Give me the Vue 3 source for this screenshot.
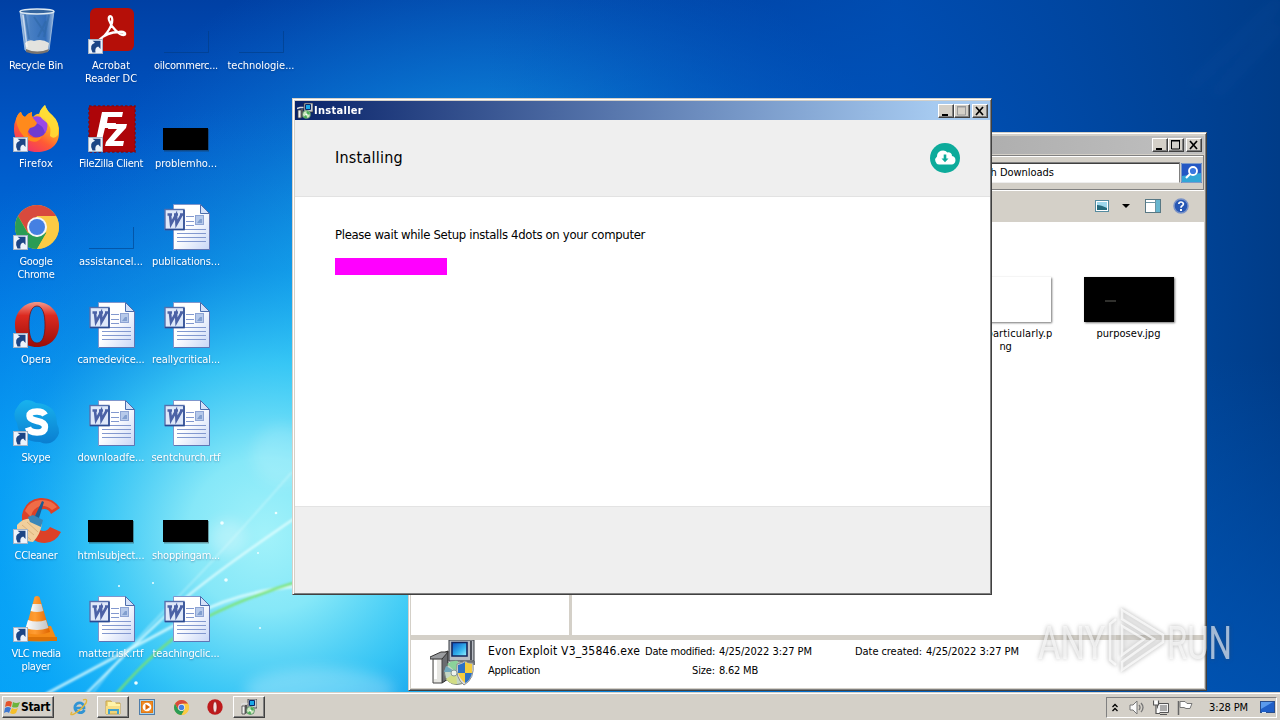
<script setup>
const desktop = [
  { k: 'bin', c: 1, r: 1, t: [['Recycle Bin', 54]] },
  { k: 'firefox', c: 1, r: 2, s: 1, t: [['Firefox', 34]] },
  { k: 'chrome', c: 1, r: 3, s: 1, t: [['Google', 33], ['Chrome', 37]] },
  { k: 'opera', c: 1, r: 4, s: 1, t: [['Opera', 30]] },
  { k: 'skype', c: 1, r: 5, s: 1, t: [['Skype', 29]] },
  { k: 'ccleaner', c: 1, r: 6, s: 1, t: [['CCleaner', 43]] },
  { k: 'vlc', c: 1, r: 7, s: 1, t: [['VLC media', 49], ['player', 29]] },
  { k: 'acrobat', c: 2, r: 1, s: 1, t: [['Acrobat', 38], ['Reader DC', 52]] },
  { k: 'filezilla', c: 2, r: 2, s: 1, t: [['FileZilla Client', 64]] },
  { k: 'clear', c: 2, r: 3, t: [['assistancel...', 64]] },
  { k: 'word', c: 2, r: 4, t: [['camedevice...', 67]] },
  { k: 'word', c: 2, r: 5, t: [['downloadfe...', 67]] },
  { k: 'black', c: 2, r: 6, t: [['htmlsubject...', 67]] },
  { k: 'word', c: 2, r: 7, t: [['matterrisk.rtf', 65]] },
  { k: 'clear', c: 3, r: 1, t: [['oilcommerc...', 64]] },
  { k: 'black', c: 3, r: 2, t: [['problemho...', 62]] },
  { k: 'word', c: 3, r: 3, t: [['publications...', 68]] },
  { k: 'word', c: 3, r: 4, t: [['reallycritical...', 68]] },
  { k: 'word', c: 3, r: 5, t: [['sentchurch.rtf', 69]] },
  { k: 'black', c: 3, r: 6, t: [['shoppingam...', 68]] },
  { k: 'word', c: 3, r: 7, t: [['teachingclic...', 67]] },
  { k: 'clear', c: 4, r: 1, t: [['technologie...', 67]] },
]

// Tracks a run of text so that it fills the given width.
const vFit = {
  mounted(el, { value }) {
    const w = el.getBoundingClientRect().width
    el.style.letterSpacing = (value - w) / el.textContent.length + 'px'
  },
}
</script>

<template>
  <div class="screen">
    <svg class="wall" viewBox="0 0 1280 720">
      <defs>
        <linearGradient id="sky" x1="0" y1="0" x2="0" y2="1">
          <stop offset="0" stop-color="#0040a4" /><stop offset=".2" stop-color="#0058c8" />
          <stop offset=".42" stop-color="#0078e4" /><stop offset=".65" stop-color="#0098f6" />
          <stop offset="1" stop-color="#00a6fc" />
        </linearGradient>
        <radialGradient id="glow" gradientUnits="userSpaceOnUse" cx="265" cy="535" r="430">
          <stop offset="0" stop-color="#a2f2fa" /><stop offset=".18" stop-color="#8cecf9" stop-opacity=".95" />
          <stop offset=".4" stop-color="#40d0f8" stop-opacity=".8" />
          <stop offset=".62" stop-color="#16a8f2" stop-opacity=".4" /><stop offset="1" stop-color="#0a80dc" stop-opacity="0" />
        </radialGradient>
        <radialGradient id="upper" gradientUnits="userSpaceOnUse" cx="500" cy="400" r="480">
          <stop offset="0" stop-color="#30c8f4" stop-opacity=".95" /><stop offset=".45" stop-color="#18a8e8" stop-opacity=".8" />
          <stop offset=".7" stop-color="#0c7cd4" stop-opacity=".6" /><stop offset="1" stop-color="#0a66c8" stop-opacity="0" />
        </radialGradient>
        <linearGradient id="east" x1="0" x2="1" y1="0" y2="0">
          <stop offset=".38" stop-color="#0050b4" stop-opacity="0" /><stop offset=".7" stop-color="#0050b4" stop-opacity=".75" />
          <stop offset="1" stop-color="#003c88" />
        </linearGradient>
        <linearGradient id="south" x1="0" x2="0" y1="0" y2="1">
          <stop offset=".5" stop-color="#0056b8" stop-opacity="0" /><stop offset="1" stop-color="#0056b8" stop-opacity=".85" />
        </linearGradient>
        <filter id="soft"><feGaussianBlur stdDeviation=".8" /></filter>
        <filter id="haze"><feGaussianBlur stdDeviation="7" /></filter>
      </defs>
      <rect width="1280" height="720" fill="url(#sky)" />
      <rect width="1280" height="720" fill="url(#upper)" />
      <rect width="1280" height="720" fill="url(#glow)" />
      <rect width="1280" height="720" fill="url(#east)" />
      <rect x="1200" width="80" height="720" fill="url(#south)" />
      <path d="M1280 0L1190 88M1280 25L1215 95" stroke="#1a5aaa" stroke-width="5" opacity=".3" filter="url(#haze)" />
      <g filter="url(#haze)" fill="#fff">
        <circle cx="228" cy="538" r="18" opacity=".28" /><circle cx="282" cy="455" r="30" opacity=".15" />
        <ellipse cx="320" cy="690" rx="75" ry="22" opacity=".25" />
      </g>
      <g fill="none" filter="url(#soft)" stroke="#e6ffff">
        <path d="M46 694Q142 643 190 617T300 586" stroke-width="2.8" opacity=".8" />
        <path d="M86 694Q143 636 175 607T298 516" stroke-width="2.2" opacity=".85" />
        <path d="M92 694Q125 650 171 604T292 472" stroke-width="1.8" opacity=".4" />
        <path d="M116 694Q165 638 207 617T300 581" stroke="#7be46d" stroke-width="2.4" opacity=".95" />
      </g>
      <g fill="#effeff">
        <circle cx="222" cy="523" r="1.8" /><circle cx="276" cy="513" r="1.3" /><circle cx="226" cy="580" r="1.8" />
        <circle cx="136" cy="683" r="1.8" /><circle cx="119" cy="586" r="1" /><circle cx="153" cy="583" r="1" />
        <circle cx="258" cy="553" r="1" /><circle cx="260" cy="628" r="1" />
      </g>
    </svg>

    <svg class="defs" width="0" height="0">
      <defs>
        <linearGradient id="fx" x1=".8" y1="0" x2=".2" y2="1"><stop offset="0" stop-color="#fff34a" /><stop offset=".35" stop-color="#ffae1e" /><stop offset=".65" stop-color="#ff5a35" /><stop offset="1" stop-color="#ee2c72" /></linearGradient>
        <linearGradient id="op" x1="0" y1="0" x2="0" y2="1"><stop offset="0" stop-color="#f29a8c" /><stop offset=".3" stop-color="#dc2a20" /><stop offset="1" stop-color="#9a0d08" /></linearGradient>
        <linearGradient id="pg" x1="0" y1="0" x2="1" y2="1"><stop offset=".45" stop-color="#fff" /><stop offset="1" stop-color="#c8d6f6" /></linearGradient>
        <linearGradient id="sk" x1="0" y1="0" x2="0" y2="1"><stop offset="0" stop-color="#18b2ee" /><stop offset="1" stop-color="#0a7ed0" /></linearGradient>
        <linearGradient id="cn" x1="0" x2="1"><stop offset="0" stop-color="#f58a1c" /><stop offset=".4" stop-color="#ff9d33" /><stop offset="1" stop-color="#e06500" /></linearGradient>
        <linearGradient id="wh" x1="0" x2="1"><stop offset="0" stop-color="#fff" /><stop offset="1" stop-color="#c4c4c4" /></linearGradient>
        <linearGradient id="gl" x1="0" x2="1"><stop offset="0" stop-color="#d8e8f6" stop-opacity=".75" /><stop offset=".3" stop-color="#6f9fd0" stop-opacity=".65" /><stop offset=".75" stop-color="#5489c4" stop-opacity=".6" /><stop offset="1" stop-color="#cfe2f2" stop-opacity=".75" /></linearGradient>
        <linearGradient id="scr" x1="0" y1="0" x2="1" y2="1"><stop offset="0" stop-color="#0a4fc4" /><stop offset=".6" stop-color="#36b6ee" /><stop offset="1" stop-color="#9cf4ff" /></linearGradient>
        <symbol id="setup" viewBox="0 0 46 46">
          <path d="M19 0H44V21H19Z" fill="#b9bdc4" stroke="#33363c" /><path d="M22 2.500H37V16H22Z" fill="url(#scr)" stroke="#16265c" stroke-width="1.600" />
          <path d="M40 1H42V20H40Z" fill="#4b4f58" /><path d="M30 21H45V25H30Z" fill="#6b6f78" />
          <path d="M11 14L18 11V39L12 43Z" fill="#6a6c70" stroke="#222" /><path d="M3 18H12V43H3Z" fill="#e6e6e2" stroke="#444" />
          <path d="M4 20H7V39H4Z" fill="#fff" /><path d="M0 17L11 12L18 12L12 19H0Z" fill="#9a9c9f" stroke="#333" />
          <ellipse cx="27" cy="33" rx="12.500" ry="11.500" fill="#c5d7c4" stroke="#7a8378" /><path d="M26 32L17 24Q22 20 28 21Z" fill="#8bd29a" /><path d="M26 32L16 39Q19 44 27 44Z" fill="#d2dd85" /><path d="M26 32L14 32L16 26Z" fill="#70a8bd" />
          <path d="M27 24Q32 23 35 21Q38 24 43 23Q45 39 34 45Q25 38 27 24Z" fill="#ddd" stroke="#8e918f" />
          <path d="M28 25Q32 24 35 22V33H28Z" fill="#2c71c5" /><path d="M35 22Q39 24 42 24V33H35Z" fill="#f4cc3c" /><path d="M28 33H35V43Q30 39 28 33Z" fill="#f4cc3c" /><path d="M35 33H42Q40 41 35 43Z" fill="#2c71c5" />
          <circle cx="24" cy="33" r="3" fill="#eef4ee" stroke="#899" />
        </symbol>
        <symbol id="setupsmall" viewBox="0 0 16 16">
          <path d="M7 0H16V9H7Z" fill="#c8ccd2" stroke="#333" stroke-width=".8" /><path d="M8.500 1.500H13.500V6.500H8.500Z" fill="#18a8e8" stroke="#0a2868" />
          <path d="M0 5.500L3 4.500H6.500" stroke="#ddd" stroke-width="1.400" fill="none" /><path d="M1 7H4V15H1Z" fill="#f2f2f0" stroke="#444" stroke-width=".8" /><path d="M4 6H6V14L4 15Z" fill="#555" />
          <circle cx="9.500" cy="11.500" r="4" fill="#cfe8c0" stroke="#3c7a50" stroke-width=".7" /><path d="M9.500 11.500V8A4 4 0 0 1 13 11.500Z" fill="#4cae58" /><path d="M9.500 11.500L6.500 14Q8 16 10 15Z" fill="#4cae58" /><circle cx="9.500" cy="11.500" r="1" fill="#fff" />
        </symbol>
        <symbol id="chromeball" viewBox="0 0 44 44">
          <circle cx="22" cy="22" r="22" fill="#f9c63d" />
          <path d="M3 11A22 22 0 0 1 41 11H22L12.500 27Z" fill="#d84a3d" /><path d="M3 11A22 22 0 0 0 22 44L32 27L22 32L12.500 27.500Z" fill="#2a9c55" />
          <path d="M41 11H22V22L31.500 27.500L22 44A22 22 0 0 0 41 11Z" fill="#fbcb45" /><circle cx="22" cy="22" r="10" fill="#f4f6f8" /><circle cx="22" cy="22" r="8" fill="#4580e2" />
        </symbol>
      </defs>
    </svg>

    <div class="desktop">
      <div v-for="(d, i) in desktop" :key="i" class="item" :style="{ gridColumn: d.c, gridRow: d.r }">
        <svg class="ico" viewBox="0 0 48 48">
          <template v-if="d.k === 'bin'">
            <path d="M8 4H42L37 43Q25 49 13 43Z" fill="url(#gl)" stroke="#adc8e2" stroke-width=".8" />
            <path d="M13 7L17 32M37 8L32 30M22 10L33 26M34 14L26 30" stroke="#2f68a7" stroke-width="2" opacity=".6" />
            <path d="M13 36Q17 32 22 34Q30 31 37 36L36 43Q25 48 14 43Z" fill="#ece9df" opacity=".95" />
            <path d="M14 42Q25 47 37 42L36 45Q25 49 14 45Z" fill="#77736f" />
            <ellipse cx="25" cy="4.500" rx="17" ry="2.500" fill="#35659e" stroke="#dde9f2" stroke-width="1.3" />
            <path d="M11 8L15 40" stroke="#fff" stroke-width="1.5" opacity=".6" />
          </template>
          <template v-else-if="d.k === 'firefox'">
            <path d="M4 14Q6 8 9 7Q10 11 13 12Q16 8 20 7Q19 11 21 12Q25 8 27 9Q29 3 33 0Q35 6 40 10Q48 17 47 28C47 40 38 47 25 47C11 47 2 37 2 24Q2 18 4 14Z" fill="url(#fx)" />
            <circle cx="25" cy="23" r="9.500" fill="#6f3bd1" /><path d="M17 15Q24 8 33 14Q38 21 33 28Q31 20 24 18Q20 19 17 15Z" fill="#9a48e6" />
            <path d="M4 14Q6 8 9 7Q10 11 13 12Q16 8 20 7Q19 11 21 13L25 18Q24 22 18 23Q14 28 17 31Q23 35 30 31Q26 40 16 35Q5 27 4 14Z" fill="#ff8a1c" />
            <path d="M33 0Q35 6 40 10Q48 17 46 30Q42 35 38 31Q40 21 34 17Q26 12 28 6Z" fill="#ffdf36" opacity=".85" />
          </template>
          <svg v-else-if="d.k === 'chrome'" x="3" y="2" width="44" height="44"><use href="#chromeball" /></svg>
          <template v-else-if="d.k === 'opera'">
            <path fill-rule="evenodd" d="M25 1C38 1 47 11 47 24S38 46 25 46S3 37 3 24S12 1 25 1ZM25 5C19 5 17 14 17 24S19 42 25 42S33 34 33 24S31 5 25 5Z" fill="url(#op)" />
            <path d="M25 5C19 5 17 14 17 24S19 42 25 42S33 34 33 24S31 5 25 5Z" fill="none" stroke="#711" stroke-width=".8" />
          </template>
          <template v-else-if="d.k === 'skype'">
            <path d="M14 1Q20 1 24 4Q45 5 45 25Q50 34 43 41Q36 47 28 43Q7 43 5 24Q-1 15 6 7Q9 2 14 1Z" fill="url(#sk)" />
            <path d="M33 16Q31 12.500 25 12.500Q17.500 12.500 17.500 17Q17.500 20.500 25 22Q33 23.500 33 28Q33 33.500 25 33.500Q17.500 33.500 16 28.500" fill="none" stroke="#fff" stroke-width="6.400" />
          </template>
          <template v-else-if="d.k === 'ccleaner'">
            <path d="M48 11Q41 0 28 1Q13 3 10 18Q9 38 26 45Q42 49 49 35L38 30Q34 36 28 33Q21 29 23 20Q25 12 32 12Q37 12 39 17Z" fill="#dc4127" />
            <path d="M13 14Q17 4 28 3Q39 2 45 10L40 13Q34 8 28 9Q20 12 19 20Z" fill="#f06c47" />
            <path d="M5 28Q12 20 22 22L30 27Q28 38 21 45Q14 45 5 37Z" fill="#f1cf9c" /><path d="M10 28L22 38M15 25L26 35M7 32L19 43" stroke="#dcb27a" />
            <path d="M16 20L21 18L31 23L29 30L18 25Z" fill="#3a86b8" /><path d="M23 19L30 4L32 5L27 21Z" fill="#1c5d93" />
          </template>
          <template v-else-if="d.k === 'vlc'">
            <path d="M12 33L39 31L45 45Q27 48 9 45Z" fill="#f58a16" /><path d="M9 42L45 42V46H9Z" fill="#dc7207" />
            <path d="M22.500 2Q25 0 27.500 2L38 37Q25 42 13 37Z" fill="url(#cn)" />
            <path d="M20.700 9H29.300L31.300 16Q25 18 18.700 16Z" fill="url(#wh)" /><path d="M16 25Q25 28 34 25L36.500 33Q25 37 13.600 33Z" fill="url(#wh)" />
          </template>
          <template v-else-if="d.k === 'acrobat'">
            <rect x="3" y="1" width="44" height="43" rx="6" fill="#b50f08" />
            <path d="M12 33C19 29 27 17 25 11C24 8 21 9 22 13C24 20 32 28 37 28C40 27 37 24 32 25C25 25 17 28 12 33Z" fill="none" stroke="#fff" stroke-width="2.300" stroke-linejoin="round" />
          </template>
          <template v-else-if="d.k === 'filezilla'">
            <rect x="2" y="1" width="46" height="46" fill="#ad0509" stroke="#7c0d18" stroke-width="1.500" stroke-dasharray="2.500 2" />
            <path d="M15 7H36L35 12H21L20 18H29L28 23H18L15 35H9Z" fill="#fff" /><path d="M22 19H40L39 23L27 36H37L36 41H18L19 37L30 24H21Z" fill="#fff" />
          </template>
          <template v-else-if="d.k === 'word'">
            <path d="M11.500 1.500H38.500L47.500 10.500V46.500H11.500Z" fill="url(#pg)" stroke="#7f96cc" /><path d="M12 46.500H47.500V10" fill="none" stroke="#5f76b4" />
            <path d="M38.500 1.500V10.500H47.500Z" fill="#d4e1f8" stroke="#4d6dac" />
            <path d="M24 13.500H32M24 18.500H32M24 22.500H32M15 26.500H44M15 30.500H44M15 34.500H44M15 38.500H44" stroke="#8298cf" />
            <rect x="33.500" y="12.500" width="8" height="9" fill="#b6c9ea" stroke="#8ea4d4" /><path d="M35 20L38 16H40V20Z" fill="#829fcf" />
            <rect x="3" y="6.500" width="19" height="20" fill="#dfe8f9" stroke="#5670ad" stroke-width="1.400" /><path d="M3 26.500H22V7" fill="none" stroke="#2c4b92" stroke-width="1.500" />
            <path d="M5.500 11.500H10M12 11.500H16M18 11.500H21M8 12L9 21L14 12L14.500 21L19.500 12" fill="none" stroke="#4c62a6" stroke-width="2.600" />
          </template>
          <template v-else-if="d.k === 'black'"><rect x="2" y="24" width="45" height="22.500" fill="#222" opacity=".4" /><rect x="1" y="23" width="45" height="22" fill="#000" /></template>
          <path v-else d="M2 45.500H46.500V24" fill="none" stroke="#023a80" stroke-opacity=".55" stroke-width="1" />
          <template v-if="d.s">
            <rect x="1.500" y="32.500" width="14" height="14" fill="#edf3fb" stroke="#a6b4c6" />
            <path d="M5.500 45.500Q1.500 38 8 35.800L5.500 33.800H13.500V42L11.200 39.500Q7.500 40.500 8.500 45.500Z" fill="#1c4585" />
          </template>
        </svg>
        <div class="cap"><div v-for="l in d.t" :key="l[0]"><span v-fit="l[1]">{{ l[0] }}</span></div></div>
      </div>
    </div>

    <section class="win explorer">
      <div class="ebar">
        <span class="btn"><svg viewBox="0 0 16 14"><path d="M4 10h6v2H4z" /></svg></span><span class="btn"><svg viewBox="0 0 16 14"><path d="M3.500 3h8v8h-8zM3 2.500h9" fill="none" stroke="#000" /></svg></span><span class="btn last"><svg viewBox="0 0 16 14"><path d="M4 3l7 8M11 3l-7 8" stroke="#000" stroke-width="1.700" /></svg></span>
      </div>
      <div class="search">
        <div class="field"><span v-fit="91">Search Downloads</span></div>
        <svg class="go" viewBox="0 0 21 20"><rect width="21" height="20" fill="#2458c4" /><path d="M1 13L20 10V19H1Z" fill="#32a6d7" /><path d="M.5 .5H20.500V19.500H.500Z" fill="none" stroke="#7d9bc9" /><circle cx="12" cy="8" r="4" fill="#3b78df" stroke="#fff" stroke-width="1.800" /><path d="M9 11L5 15" stroke="#fff" stroke-width="2.200" /></svg>
      </div>
      <div class="tools">
        <svg viewBox="0 0 14 12" width="14" height="12"><rect x=".5" y=".5" width="13" height="11" fill="#fff" stroke="#558b9f" /><path d="M2 2H12V9H2Z" fill="#9ed8ed" /><path d="M2 5Q6 5 12 8V10H2Z" fill="#246a7c" /></svg>
        <svg class="drop" viewBox="0 0 8 4" width="8" height="4"><path d="M0 0H8L4 4Z" /></svg>
        <svg class="pane" viewBox="0 0 16 14" width="16" height="14"><rect x=".5" y=".5" width="15" height="13" fill="#fff" stroke="#587884" /><path d="M1 3.500H10M10.500 1V13" stroke="#6c95a4" /><path d="M11 1H15V13H11Z" fill="#67b6cf" /></svg>
        <svg class="help" viewBox="0 0 16 16" width="16" height="16"><circle cx="8" cy="8" r="7" fill="#2757b4" stroke="#7992c8" stroke-width="1.500" /><path d="M5.800 6Q6 4 8 4T10.400 6Q10.300 7.200 8.900 8Q8 8.500 8 9.800" fill="none" stroke="#fff" stroke-width="1.700" /><rect x="7" y="11" width="2" height="2" fill="#fff" /></svg>
      </div>
      <div class="files">
        <div class="side"></div>
        <div class="list">
          <div class="file"><div class="thumb white"></div><div class="fn long"><span v-fit="66">particularly.p</span></div><div class="fn"><span v-fit="12">ng</span></div></div>
          <div class="file"><div class="thumb dark"><i></i></div><div class="fn"><span v-fit="64">purposev.jpg</span></div></div>
        </div>
      </div>
      <div class="details">
        <svg class="big" width="46" height="46"><use href="#setup" /></svg>
        <div class="c1"><p class="nm"><span v-fit="152">Evon Exploit V3_35846.exe</span></p><p><span v-fit="52">Application</span></p></div>
        <div class="c2"><p><span v-fit="70">Date modified:</span></p><p><span v-fit="23">Size:</span></p></div>
        <div class="c3"><p><span v-fit="93">4/25/2022 3:27 PM</span></p><p><span v-fit="39">8.62 MB</span></p></div>
        <div class="c4"><p><span v-fit="67">Date created:</span></p></div>
        <div class="c5"><p><span v-fit="93">4/25/2022 3:27 PM</span></p></div>
      </div>
    </section>

    <section class="win installer">
      <div class="title">
        <svg width="16" height="16"><use href="#setupsmall" /></svg>
        <b><span v-fit="49">Installer</span></b>
        <span class="btn"><svg viewBox="0 0 16 14"><path d="M4 10h6v2H4z" /></svg></span><span class="btn"><svg viewBox="0 0 16 14"><path d="M3.500 3h8v8h-8zM3 2.500h9" fill="none" stroke="#999" /></svg></span><span class="btn last"><svg viewBox="0 0 16 14"><path d="M4 3l7 8M11 3l-7 8" stroke="#000" stroke-width="1.700" /></svg></span>
      </div>
      <div class="head">
        <span class="h1"><span v-fit="68">Installing</span></span>
        <svg width="30" height="30" viewBox="0 0 30 30"><circle cx="15" cy="15" r="15" fill="#0dab9b" /><path d="M9 21.500A4.500 4.500 0 0 1 7 13.500A6 6 0 0 1 17.500 9.500A3.500 3.500 0 0 1 22 13A4.300 4.300 0 0 1 21.500 21.500Z" fill="#fff" /><path d="M13.700 11.500H16.300V15.500H18.500L15 19.300L11.500 15.500H13.700Z" fill="#0dab9b" /></svg>
      </div>
      <div class="body">
        <p><span v-fit="310">Please wait while Setup installs 4dots on your computer</span></p>
        <div class="progress"></div>
      </div>
      <div class="foot"></div>
    </section>

    <svg class="mark" viewBox="0 0 200 70" width="200" height="70">
      <g class="lets">
        <text x="3" y="53" textLength="67" lengthAdjust="spacingAndGlyphs">ANY</text>
        <text x="132" y="53" textLength="65" lengthAdjust="spacingAndGlyphs">RUN</text>
      </g>
      <g class="tri"><path d="M81 13L75 18V54L81 59M87 4L128 29V36L87 64V56L119 33L87 13Z" /><path d="M87 20V49L109 33Z" /></g>
    </svg>

    <footer class="task">
      <div class="start"><svg width="17" height="16" viewBox="0 0 17 16"><path d="M2 3Q5 1 8 3L7 8Q4 6 1 8Z" fill="#e4542b" /><path d="M9 3Q12 5 16 3L14 8Q11 9 8 8Z" fill="#6db43b" /><path d="M1 9Q4 7 7 9L5 14Q3 12 0 14Z" fill="#3d78d1" /><path d="M8 9Q11 11 14 9L12 14Q9 16 6 14Z" fill="#f5bf29" /></svg><b><span v-fit="29">Start</span></b></div>
      <div class="tb"><svg width="18" height="18" viewBox="0 0 18 18"><path d="M14.500 12Q12 16 8 14Q4 12 5 8Q7 4 11 5Q14 6 14 10H6" fill="none" stroke="#3194d4" stroke-width="2.700" /><path d="M2 14Q-1 18 4 16Q11 12 16 5Q18 0 13 2" fill="none" stroke="#e3b637" stroke-width="1.400" /></svg></div>
      <div class="tb on"><svg width="18" height="17" viewBox="0 0 18 17"><path d="M2 2H7L8 4H16V15H2Z" fill="#efd477" stroke="#c6a34d" /><path d="M4 3H11L12 5H16V8H4Z" fill="#fff3a9" /><path d="M2 7H16V15H13V11H6V15H2Z" fill="#f8df86" /><path d="M5 15V11H14V15" fill="none" stroke="#45a3cc" stroke-width="2" /></svg></div>
      <div class="tb"><svg width="16" height="16" viewBox="0 0 16 16"><rect x=".5" y=".5" width="15" height="15" fill="#a9d2eb" stroke="#4e7daa" /><rect x="2.500" y="2.500" width="11" height="11" fill="#f08b24" stroke="#de7815" /><circle cx="8" cy="8" r="4.300" fill="#fff" /><path d="M6.500 5L11 8L6.500 11Z" fill="#d96508" /></svg></div>
      <div class="tb"><svg width="15" height="15"><use href="#chromeball" /></svg></div>
      <div class="tb"><svg width="16" height="16" viewBox="0 0 16 16"><circle cx="8" cy="8" r="7.700" fill="#be1a1c" /><ellipse cx="8" cy="8" rx="2" ry="5.500" fill="#f4dddd" stroke="#811" stroke-width=".6" /></svg></div>
      <div class="tb on"><svg width="16" height="16"><use href="#setupsmall" /></svg></div>
      <div class="tray">
        <svg class="t1" width="6" height="9" viewBox="0 0 6 9"><path d="M.5 4L3 1.500L5.500 4M.5 8L3 5.500L5.500 8" fill="none" stroke="#000" stroke-width="1.300" /></svg>
        <svg class="t2" width="16" height="15" viewBox="0 0 16 15"><path d="M1 5H4L8 1V14L4 10H1Z" fill="#fafafa" stroke="#777" /><path d="M10 5Q12 7.500 10 10M12 3Q16 7.500 12 12" fill="none" stroke="#777" stroke-width="1.300" /></svg>
        <svg class="t3" width="16" height="15" viewBox="0 0 16 15"><path d="M4.500 3.500H15.500V12.500H4.500ZM7 14.500H14" fill="#f4f4f4" stroke="#555" /><path d="M7 5H14V11H7Z" fill="#aaa" /><path d="M.5 .5V5H5.500V.5M3 5V13.500H7" fill="#fff" stroke="#555" stroke-width="1.200" /></svg>
        <svg class="t4" width="16" height="15" viewBox="0 0 16 15"><path d="M1.500 1V15" stroke="#666" stroke-width="1.500" /><path d="M3 1.500H8L10 3.500H15L13 8.500H9L7 7.500H3Z" fill="#fff" stroke="#777" /></svg>
        <span class="clock"><span v-fit="39">3:28 PM</span></span>
        <svg class="t5" width="15" height="13" viewBox="0 0 15 13"><rect x=".5" y=".5" width="14" height="11" fill="#1f5fc7" stroke="#284d8c" /><path d="M1 1H13L1 8Z" fill="#5a9aec" /><path d="M2 11H6V12H2Z" fill="#d8e8f6" /></svg>
      </div>
    </footer>
  </div>
</template>

<style>
html, body { margin: 0; overflow: hidden; }
</style>
<style scoped>
.screen { position: relative; width: 1280px; height: 720px; overflow: hidden; font: 11px/13px "DejaVu Sans Condensed", "DejaVu Sans", sans-serif; color: #000; }
.screen * { box-sizing: border-box; }
span { white-space: nowrap; }
p { margin: 0; }
.defs, .wall { position: absolute; left: 0; top: 0; }
.wall { width: 1280px; height: 720px; }
.desktop { position: absolute; left: -1px; top: 0; display: grid; grid-template-columns: repeat(4, 75px); grid-template-rows: repeat(7, 98px); }
.item { padding-top: 7px; }
.ico { display: block; width: 48px; height: 48px; margin-left: 13px; overflow: visible; }
.cap { margin: 4px 1px 0 0; text-align: center; color: #fff; text-shadow: 0 1px 2px rgba(0, 40, 90, .4); }
.win { position: absolute; background: #d4d0c8; border: 1px solid #d4d0c8; border-right-color: #404040; border-bottom-color: #404040; box-shadow: inset 1px 1px #fff, inset -1px -1px #808080; display: flex; flex-direction: column; }
.explorer { left: 408px; top: 132px; width: 799px; height: 559px; padding: 3px 2px 2px; }
.installer { left: 292px; top: 98px; width: 700px; height: 497px; padding: 2px 1px 1px 2px; }
.btn { display: block; width: 16px; height: 14px; background: #d4d0c8; border: 1px solid #fff; border-right-color: #404040; border-bottom-color: #404040; box-shadow: inset -1px -1px #808080; }
.btn svg { display: block; width: 16px; height: 14px; margin: -1px; }
.btn.last { margin-left: 2px; }
.ebar { height: 18px; flex: none; background: linear-gradient(90deg, #808080, #b0b0b0 75%, #c0c0c0); display: flex; justify-content: flex-end; align-items: center; padding-right: 2px; }
.search { height: 35px; flex: none; margin-top: 1px; border: 1px solid #808080; box-shadow: inset 1px 1px #fff, 0 1px #fff; display: flex; align-items: center; justify-content: flex-end; padding-right: 1px; }
.field { width: 222px; height: 21px; background: #fff; border: 1px solid #808080; border-bottom-color: #eee; box-shadow: inset 0 1px #404040; margin-right: 1px; padding: 3px 0 0 4px; }
.go { width: 21px; height: 20px; }
.tools { height: 32px; flex: none; display: flex; align-items: center; justify-content: flex-end; padding-right: 15px; }
.drop { margin-left: 13px; }
.pane { margin-left: 15px; }
.help { margin-left: 12px; }
.files { flex: 1; background: #fff; display: flex; }
.side { width: 161px; border-right: 3px solid #d4d0c8; }
.list { flex: 1; display: flex; justify-content: flex-end; padding: 55px 14px 0 0; }
.file { width: 123px; text-align: center; }
.thumb { width: 90px; height: 45px; margin: 0 auto 5px; box-shadow: 1px 1px 2px rgba(0, 0, 0, .55); }
.file .fn { line-height: 13px; }
.file .long { padding-left: 28px; }
.white { background: #fff; }
.dark { background: #000; padding: 23px 0 0 21px; }
.dark i { display: block; width: 11px; height: 2px; background: #30302d; }
.details { height: 53px; flex: none; border-top: 5px solid #d4d0c8; background: #fff; display: flex; line-height: 19px; }
.big { margin: 0 0 0 19px; }
.c1 { width: 156px; margin-left: 12px; padding-top: 2px; }
.c1 .nm { font-size: 12px; }
.c2 { width: 71px; padding-top: 2px; text-align: right; }
.c3 { width: 94px; margin-left: 4px; padding-top: 2px; }
.c4 { width: 67px; margin-left: 42px; padding-top: 2px; }
.c5 { margin-left: 4px; padding-top: 2px; }
.title { height: 19px; flex: none; background: linear-gradient(90deg, #0a246a, #a6caf0 92%); color: #fff; display: flex; align-items: center; padding: 0 2px 0 2px; }
.title b { flex: 1; margin-left: 1px; }
.head { height: 77px; flex: none; background: #efefef; border-bottom: 1px solid #e2e2e2; display: flex; align-items: center; justify-content: space-between; padding: 0 30px 0 40px; }
.h1 { font-size: 16px; line-height: 20px; }
.body { flex: 1; background: #fff; padding: 29px 0 0 40px; font-size: 13px; line-height: 17px; }
.progress { width: 112px; height: 17px; margin-top: 15px; background: #f0f; }
.foot { height: 87px; flex: none; background: #efefef; border-top: 1px solid #e3e3e3; }
.mark { position: absolute; left: 1035px; top: 606px; overflow: visible; filter: drop-shadow(0 0 2px rgba(70, 70, 70, .6)); }
.lets { fill: #fff; opacity: .62; font: 47px "Roboto", "Liberation Sans", sans-serif; }
.tri { fill: rgba(255, 255, 255, .35); stroke: #fff; stroke-width: 2.500; opacity: .75; }
.task { position: absolute; left: 0; top: 692px; width: 1280px; height: 28px; background: #d4d0c8; border-top: 1px solid #d4d0c8; box-shadow: inset 0 1px #fff; display: flex; align-items: center; padding: 1px 3px 0 2px; }
.start, .on { border: 1px solid #fff; border-right-color: #404040; border-bottom-color: #404040; box-shadow: inset -1px -1px #808080; }
.start { width: 52px; height: 22px; display: flex; align-items: center; padding-left: 1px; margin-right: 9px; }
.start b { margin-left: 0; font-size: 12px; }
.tb { width: 32px; height: 22px; margin-right: 2px; display: flex; align-items: center; justify-content: center; }
.tray { width: 171px; height: 21px; margin-left: auto; border: 1px solid #fff; border-left-color: #808080; border-top-color: #808080; display: flex; align-items: center; }
.t1 { margin-left: 5px; }
.t2 { margin-left: 11px; }
.t3 { margin-left: 8px; }
.t4 { margin-left: 8px; }
.clock { margin-left: 16px; width: 39px; }
.t5 { margin-left: 12px; }
</style>
